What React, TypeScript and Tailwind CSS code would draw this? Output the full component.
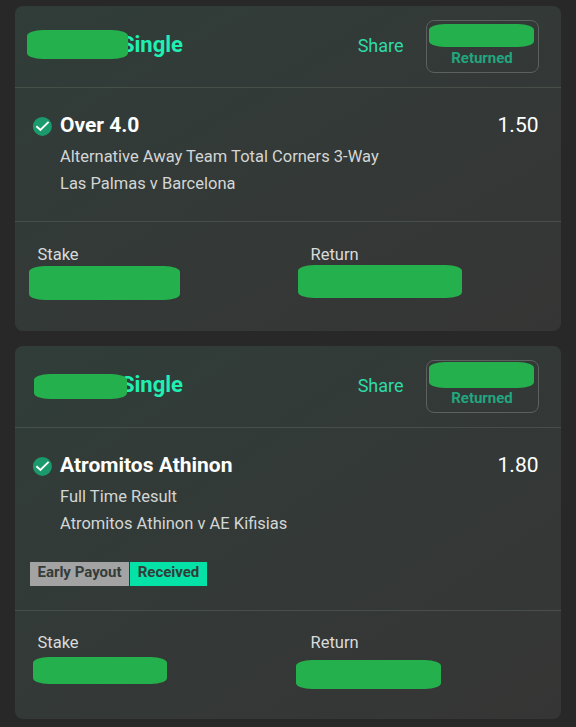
import React from "react";

type Bet = {
    selection: string;
    odds: string;
    market: string;
    event: string;
    earlyPayout?: boolean;
    masks: { title: string; badge: string; stake: string; returns: string };
};

const bets: Bet[] = [
    {
        selection: "Over 4.0",
        odds: "1.50",
        market: "Alternative Away Team Total Corners 3-Way",
        event: "Las Palmas v Barcelona",
        masks: {
            title: "left-[12px] top-[24px] w-[101px] h-[29px]",
            badge: "left-[2px] top-[3px] w-[105px] h-[23px]",
            stake: "left-[14px] top-[44px] w-[151px] h-[34px]",
            returns: "left-[10px] top-[43px] w-[164px] h-[33px]",
        },
    },
    {
        selection: "Atromitos Athinon",
        odds: "1.80",
        market: "Full Time Result",
        event: "Atromitos Athinon v AE Kifisias",
        earlyPayout: true,
        masks: {
            title: "left-[19px] top-[28px] w-[93px] h-[25px]",
            badge: "left-[2px] top-[1px] w-[105px] h-[26px]",
            stake: "left-[18px] top-[46px] w-[134px] h-[27px]",
            returns: "left-[8px] top-[49px] w-[145px] h-[29px]",
        },
    },
];

const Mask: React.FC<{ className: string }> = ({ className }) => (
    <span className={`absolute rounded-[16px/6px] bg-[#24b14d] ${className}`} />
);

const CheckIcon: React.FC = () => (
    <svg viewBox="0 0 20 20" className="mt-[3px] h-5 w-5 shrink-0">
        <circle cx="10.4" cy="10.4" r="9.5" fill="#1b9b6d" />
        <path d="M4.4 10.2 8.4 14 16.6 5.8" fill="none" stroke="#fff" strokeWidth="1.9" />
    </svg>
);

const BetCard: React.FC<{ bet: Bet }> = ({ bet }) => {
    const { masks } = bet;

    return (
        <article
            className={`flex flex-col rounded-lg bg-linear-to-br from-[#303d39] via-[#333937] via-50% to-[#363535] ${
                bet.earlyPayout ? "h-[373px]" : "h-[325px]"
            }`}
        >
            <header className="relative flex h-[82px] shrink-0 items-start border-b border-[#465049] pr-[22px]">
                <h2 className="ml-[106px] mt-[24px] text-[22px] leading-[30px] font-bold text-[#1ff0b2]">Single</h2>
                <Mask className={masks.title} />
                <button className="mr-[22.5px] ml-auto mt-[27px] text-[18px] leading-[26px] text-[#2edba7]">Share</button>
                <div className="relative mt-[14px] flex h-[53px] w-[113px] items-end justify-center rounded-lg border border-[#5c605f] pr-px pb-[4px]">
                    <span className="text-[15px] leading-5 font-bold text-[#22a67d]">Returned</span>
                    <Mask className={masks.badge} />
                </div>
            </header>

            <section
                className={`shrink-0 border-b border-[#465049] pt-[25px] pr-[22.5px] pl-[17px] ${
                    bet.earlyPayout ? "h-[183px]" : "h-[134px]"
                }`}
            >
                <div className="flex h-[25px] items-start">
                    <CheckIcon />
                    <h3 className="ml-[8px] text-[21px] leading-6 font-bold text-white">{bet.selection}</h3>
                    <span className="ml-auto text-[21px] leading-6 text-white">{bet.odds}</span>
                </div>
                <div className="mt-[5px] ml-[28px] text-[16.5px] leading-[27px] text-[#d3d6d5]">
                    <p>{bet.market}</p>
                    <p>{bet.event}</p>
                </div>
                {bet.earlyPayout && (
                    <div className="mt-[25px] -ml-[2px] flex h-6 gap-px text-[15px] leading-[20px] font-bold text-[#343c3a]">
                        <span className="w-[99px] bg-[#a3a3a3] text-center whitespace-nowrap">Early Payout</span>
                        <span className="w-[77px] bg-[#05e2a8] text-center">Received</span>
                    </div>
                )}
            </section>

            <footer
                className={`grid flex-1 grid-cols-2 text-[16.5px] leading-6 text-[#d9dcdb] ${
                    bet.earlyPayout ? "*:pt-[20px]" : "*:pt-[21px]"
                }`}
            >
                <div className="relative pl-[22.5px]">
                    Stake
                    <Mask className={masks.stake} />
                </div>
                <div className="relative pl-[22.5px]">
                    Return
                    <Mask className={masks.returns} />
                </div>
            </footer>
        </article>
    );
};

const App: React.FC = () => (
    <main className="flex h-[727px] flex-col gap-[15px] bg-[#282828] px-[15px] pt-[6px] font-[Roboto,sans-serif]">
        {bets.map((bet) => (
            <BetCard key={bet.selection} bet={bet} />
        ))}
    </main>
);

export default App;
